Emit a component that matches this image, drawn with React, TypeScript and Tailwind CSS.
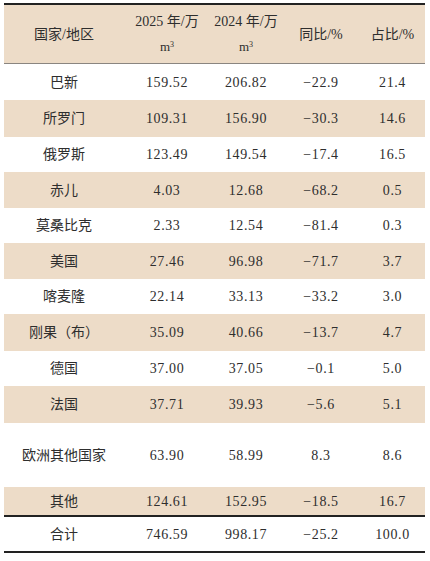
const rows: { name: string; a: string; b: string; yoy: string; share: string; h: string; tan: boolean }[] = [
  { name: '巴新', a: '159.52', b: '206.82', yoy: '−22.9', share: '21.4', h: 'h-[36px]', tan: false },
  { name: '所罗门', a: '109.31', b: '156.90', yoy: '−30.3', share: '14.6', h: 'h-[37px]', tan: true },
  { name: '俄罗斯', a: '123.49', b: '149.54', yoy: '−17.4', share: '16.5', h: 'h-[35px]', tan: false },
  { name: '赤儿', a: '4.03', b: '12.68', yoy: '−68.2', share: '0.5', h: 'h-[36px]', tan: true },
  { name: '莫桑比克', a: '2.33', b: '12.54', yoy: '−81.4', share: '0.3', h: 'h-[35px]', tan: false },
  { name: '美国', a: '27.46', b: '96.98', yoy: '−71.7', share: '3.7', h: 'h-[36px]', tan: true },
  { name: '喀麦隆', a: '22.14', b: '33.13', yoy: '−33.2', share: '3.0', h: 'h-[35px]', tan: false },
  { name: '刚果（布）', a: '35.09', b: '40.66', yoy: '−13.7', share: '4.7', h: 'h-[37px]', tan: true },
  { name: '德国', a: '37.00', b: '37.05', yoy: '−0.1', share: '5.0', h: 'h-[35px]', tan: false },
  { name: '法国', a: '37.71', b: '39.93', yoy: '−5.6', share: '5.1', h: 'h-[37px]', tan: true },
  { name: '欧洲其他国家', a: '63.90', b: '58.99', yoy: '8.3', share: '8.6', h: 'h-[64px]', tan: false },
  { name: '其他', a: '124.61', b: '152.95', yoy: '−18.5', share: '16.7', h: 'h-[28px]', tan: true },
]

const cols = 'grid grid-cols-[120px_86px_72px_78px_65px]'

function Row({ cells, className }: { cells: string[]; className: string }) {
  return (
    <div className={`${cols} ${className}`}>
      {cells.map((c, i) => (
        <div key={i} className={`flex items-center justify-center ${i > 0 ? 'tracking-[0.6px]' : ''}`}>
          {c}
        </div>
      ))}
    </div>
  )
}

export default function App() {
  return (
    <div
      className="w-[430px] h-[561px] bg-white pt-[3px] pl-[4px] text-[14px] text-[#2e2e2e]"
      style={{ fontFamily: '"Liberation Serif", "Noto Sans CJK SC", serif' }}
    >
      <div className="w-[421px] border-t-2 border-[#222222]">
        <div className={`${cols} h-[59px] bg-[#eddcc8] border-b border-[#8a8580]`}>
          <div className="flex items-center justify-center">国家/地区</div>
          <div className="flex flex-col items-center justify-center leading-[25px]">
            <span>2025 年/万</span>
            <span className="text-[13px]">m<sup className="text-[8px]">3</sup></span>
          </div>
          <div className="flex flex-col items-center justify-center leading-[25px]">
            <span>2024 年/万</span>
            <span className="text-[13px]">m<sup className="text-[8px]">3</sup></span>
          </div>
          <div className="flex items-center justify-center">同比/%</div>
          <div className="flex items-center justify-center">占比/%</div>
        </div>
        {rows.map((r) => (
          <Row
            key={r.name}
            cells={[r.name, r.a, r.b, r.yoy, r.share]}
            className={`${r.h} ${r.tan ? 'bg-[#eddcc8]' : 'bg-white'}`}
          />
        ))}
        <Row
          cells={['合计', '746.59', '998.17', '−25.2', '100.0']}
          className="h-[38px] border-t-2 border-b-2 border-[#222222]"
        />
      </div>
    </div>
  )
}
